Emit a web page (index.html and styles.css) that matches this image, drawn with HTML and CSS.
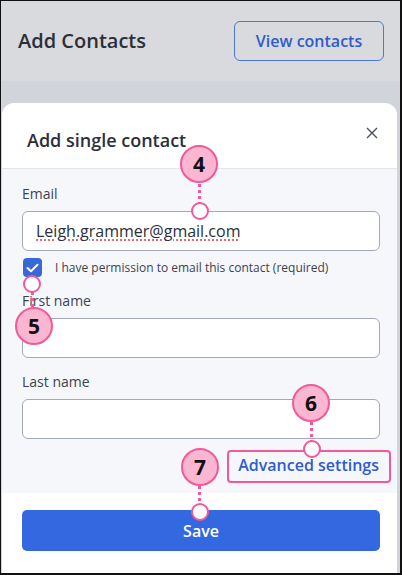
FILE: index.html
```html
<!DOCTYPE html>
<html lang="en">
<head>
  <meta charset="UTF-8">
  <title>Add Contacts</title>
  <link rel="stylesheet" href="styles.css">
</head>
<body>

<div class="frame">
  <div class="page-header">
    <h1>Add Contacts</h1>
    <button class="btn-outline">View contacts</button>
  </div>

  <div class="modal">
    <div class="modal-top">
      <h2>Add single contact</h2>
      <svg class="close" width="12" height="12" viewBox="0 0 12 12">
        <path d="M1 1 L11 11 M11 1 L1 11" stroke="#4b5060" stroke-width="1.4" fill="none"/>
      </svg>
    </div>

    <div class="modal-body">
      <label class="field-label">Email</label>
      <div class="field"><span class="typo">Leigh.grammer@gmail.com</span></div>

      <div class="check-row">
        <span class="checkbox">
          <svg width="13" height="10" viewBox="0 0 13 10">
            <path d="M1.5 5 L5 8.3 L11.5 1.7" stroke="#fff" stroke-width="2" fill="none" stroke-linecap="round" stroke-linejoin="round"/>
          </svg>
        </span>
        <span class="check-text">I have permission to email this contact (required)</span>
      </div>

      <label class="field-label">First name</label>
      <div class="field"></div>

      <label class="field-label">Last name</label>
      <div class="field"></div>

      <div class="adv-row">
        <a class="adv-link">Advanced settings</a>
      </div>
    </div>

    <div class="modal-foot">
      <button class="btn-save">Save</button>
    </div>
  </div>

  <!-- callouts -->
  <div class="callout-box"></div>

  <div class="dots" style="left:197px;top:183px;height:19px"></div>
  <div class="pin" style="left:190px;top:201px"></div>
  <div class="badge" style="left:179px;top:144px">4</div>

  <div class="dots" style="left:30px;top:291px;height:16px"></div>
  <div class="pin" style="left:22px;top:274px"></div>
  <div class="badge" style="left:14px;top:306px">5</div>

  <div class="dots" style="left:309px;top:421px;height:20px"></div>
  <div class="pin" style="left:302px;top:439px"></div>
  <div class="badge" style="left:291px;top:383px">6</div>

  <div class="dots" style="left:197px;top:485px;height:19px"></div>
  <div class="pin" style="left:190px;top:502px"></div>
  <div class="badge" style="left:180px;top:447px">7</div>
</div>

</body>
</html>
```

FILE: styles.css
```css
body {
  margin: 0;
  font-family: "Open Sans", Lato, sans-serif;
  background: #fff;
}
.frame {
  position: relative;
  width: 402px;
  height: 575px;
  box-sizing: border-box;
  border: 1px solid #111;
  border-right-width: 2px;
  border-bottom-width: 2px;
  background: #d1d4da;
  overflow: hidden;
}
.page-header {
  height: 80px;
  background: #d9dadd;
  display: flex;
  align-items: center;
  justify-content: space-between;
  padding: 0 16px 0 17px;
}
h1 {
  margin: 0 0 2px;
  font-size: 20px;
  font-weight: 600;
  color: #2b2f3b;
}
.btn-outline {
  width: 150px;
  height: 40px;
  border: 1px solid #4d77da;
  border-radius: 6px;
  background: transparent;
  color: #2f5ccf;
  font-family: inherit;
  font-size: 16px;
  font-weight: 600;
}
.modal {
  margin: 22px 3px 0 1px;
  border-radius: 12px 12px 0 0;
  background: #fff;
  overflow: hidden;
}
.modal-top {
  height: 66px;
  display: flex;
  align-items: center;
  justify-content: space-between;
  padding: 9px 19px 0 25px;
  box-sizing: border-box;
  border-bottom: 1px solid #e2e5ed;
}
h2 {
  margin: 0;
  font-size: 18px;
  font-weight: 600;
  color: #2b2f3b;
}
.close {
  margin-top: -15px;
}
.modal-body {
  background: #f6f7fb;
  height: 324px;
  box-sizing: border-box;
  padding: 16px 17px 0 20px;
}
.field-label {
  display: block;
  font-size: 14px;
  color: #3d4252;
  line-height: 18px;
  margin-bottom: 8px;
}
.field {
  height: 40px;
  box-sizing: border-box;
  border: 1px solid #a3a9b9;
  border-radius: 6px;
  background: #fff;
  padding-left: 13px;
  display: flex;
  align-items: center;
  margin-bottom: 15px;
}
.typo {
  font-size: 16px;
  color: #2b2f3b;
  text-decoration: underline dotted #e0485a;
  text-underline-offset: 3px;
}
.check-row {
  display: flex;
  align-items: center;
  height: 19px;
  margin: -8px 0 15px 1px;
}
.checkbox {
  width: 19px;
  height: 19px;
  border-radius: 4px;
  background: #3867d8;
  display: flex;
  align-items: center;
  justify-content: center;
}
.check-text {
  margin-left: 13px;
  font-size: 12px;
  color: #3d4252;
}
.adv-row {
  display: flex;
  justify-content: flex-end;
  margin-top: 4px;
}
.adv-link {
  font-size: 16px;
  font-weight: 600;
  color: #2f5ccf;
  margin-right: 1px;
}
.modal-foot {
  height: 80px;
  padding: 17px 17px 0 20px;
  box-sizing: border-box;
  background: #fff;
}
.btn-save {
  width: 100%;
  height: 41px;
  border: none;
  border-radius: 5px;
  background: #3368e0;
  color: #fff;
  font-family: inherit;
  font-size: 16px;
  font-weight: 600;
}

.callout-box {
  position: absolute;
  left: 226px;
  top: 449px;
  width: 164px;
  height: 33px;
  box-sizing: border-box;
  border: 2.5px solid #f3589b;
  border-radius: 4px;
}
.badge {
  position: absolute;
  width: 38px;
  height: 38px;
  box-sizing: border-box;
  border: 2.5px solid #f3589b;
  border-radius: 50%;
  background: #fbb6d1;
  color: #111;
  font-size: 21px;
  font-weight: 700;
  display: flex;
  align-items: center;
  justify-content: center;
}
.pin {
  position: absolute;
  width: 18px;
  height: 18px;
  box-sizing: border-box;
  border: 2.5px solid #f3589b;
  border-radius: 50%;
  background: #fff;
}
.dots {
  position: absolute;
  width: 3px;
  background: repeating-linear-gradient(#f3589b 0 3px, transparent 3px 6px);
}
```
